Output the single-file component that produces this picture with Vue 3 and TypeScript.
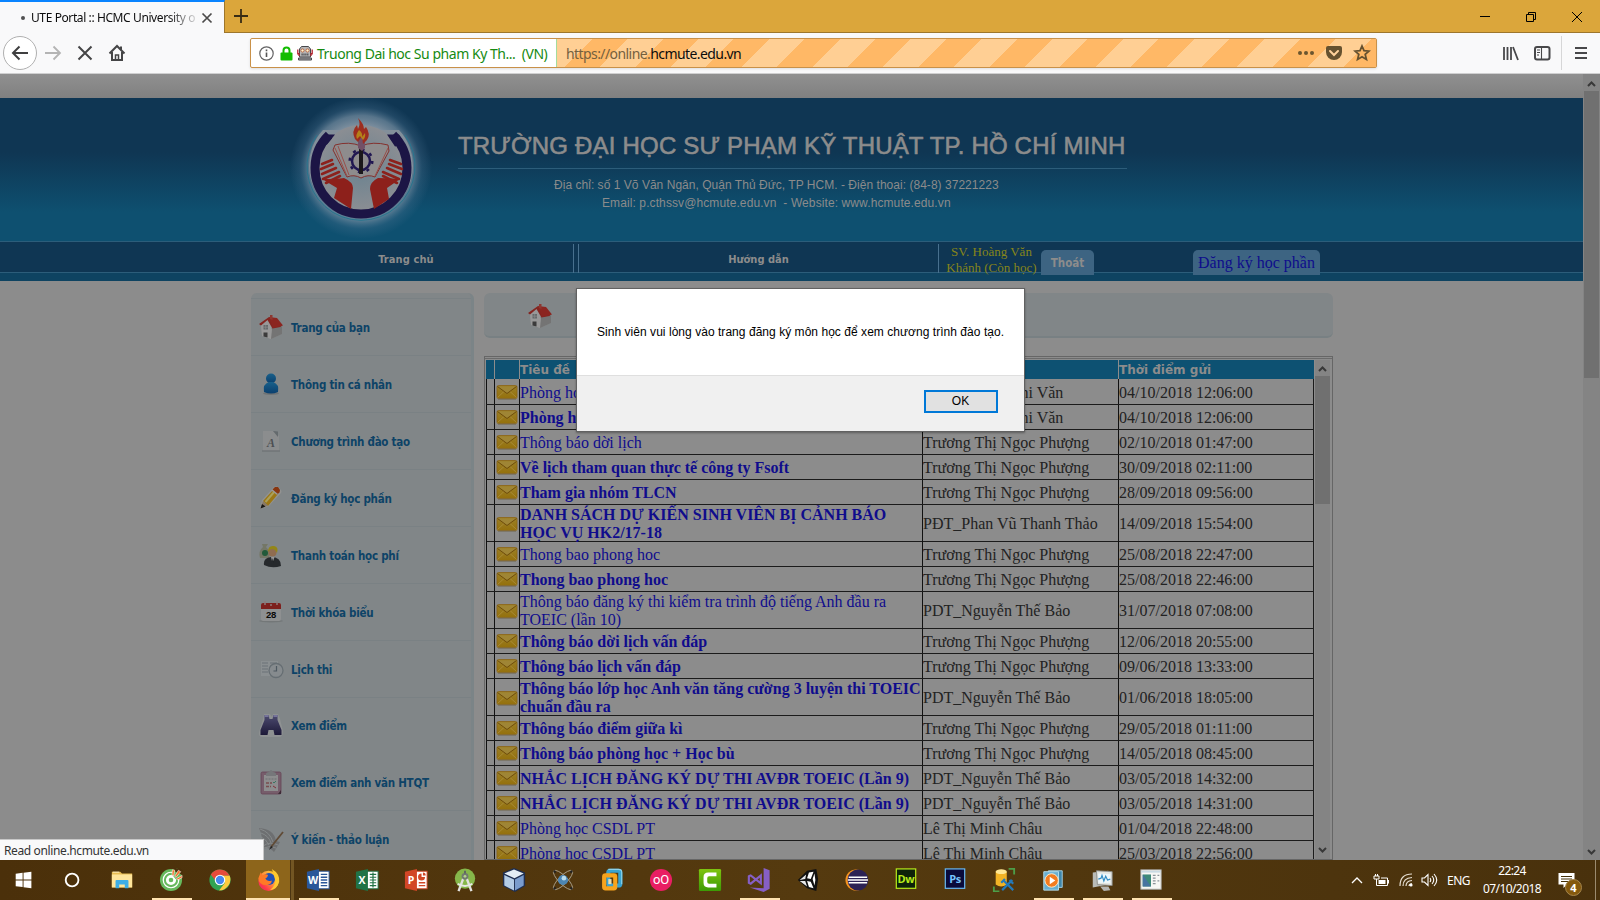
<script setup lang="ts">
interface MenuItem {
  icon: string
  label: string
  glyph?: string
  flush?: boolean
}
interface Message {
  title: string
  sender: string
  sent: string
  bold?: boolean
  tall?: boolean
}
interface Task {
  icon: string
  glyph?: string
  state?: 'open' | 'active'
}

const menu: MenuItem[] = [
  { icon: 'house', label: 'Trang của bạn' },
  { icon: 'person', label: 'Thông tin cá nhân' },
  { icon: 'letter', label: 'Chương trình đào tạo', glyph: 'A' },
  { icon: 'pencil', label: 'Đăng ký học phần' },
  { icon: 'payment', label: 'Thanh toán học phí' },
  { icon: 'calendar', label: 'Thời khóa biểu', glyph: '28' },
  { icon: 'exam', label: 'Lịch thi' },
  { icon: 'binoculars', label: 'Xem điểm', flush: true },
  { icon: 'clipboard', label: 'Xem điểm anh văn HTQT' },
  { icon: 'feather', label: 'Ý kiến - thảo luận' },
]

const phuong = 'Trương Thị Ngọc Phượng'
const bao = 'PDT_Nguyễn Thế Bảo'
const chau = 'Lê Thị Minh Châu'

const messages: Message[] = [
  { title: 'Phòng học CSDL PT', sender: 'Nguyễn Trần Thi Văn', sent: '04/10/2018 12:06:00' },
  { title: 'Phòng học CSDL PT', sender: 'Nguyễn Trần Thi Văn', sent: '04/10/2018 12:06:00', bold: true },
  { title: 'Thông báo dời lịch', sender: phuong, sent: '02/10/2018 01:47:00' },
  { title: 'Về lịch tham quan thực tế công ty Fsoft', sender: phuong, sent: '30/09/2018 02:11:00', bold: true },
  { title: 'Tham gia nhóm TLCN', sender: phuong, sent: '28/09/2018 09:56:00', bold: true },
  { title: 'DANH SÁCH DỰ KIẾN SINH VIÊN BỊ CẢNH BÁO HỌC VỤ HK2/17-18', sender: 'PĐT_Phan Vũ Thanh Thảo', sent: '14/09/2018 15:54:00', bold: true, tall: true },
  { title: 'Thong bao phong hoc', sender: phuong, sent: '25/08/2018 22:47:00' },
  { title: 'Thong bao phong hoc', sender: phuong, sent: '25/08/2018 22:46:00', bold: true },
  { title: 'Thông báo đăng ký thi kiểm tra trình độ tiếng Anh đầu ra TOEIC (lần 10)', sender: bao, sent: '31/07/2018 07:08:00', tall: true },
  { title: 'Thông báo dời lịch vấn đáp', sender: phuong, sent: '12/06/2018 20:55:00', bold: true },
  { title: 'Thông báo lịch vấn đáp', sender: phuong, sent: '09/06/2018 13:33:00', bold: true },
  { title: 'Thông báo lớp học Anh văn tăng cường 3 luyện thi TOEIC chuẩn đầu ra', sender: bao, sent: '01/06/2018 18:05:00', bold: true, tall: true },
  { title: 'Thông báo điểm giữa kì', sender: phuong, sent: '29/05/2018 01:11:00', bold: true },
  { title: 'Thông báo phòng học + Học bù', sender: phuong, sent: '14/05/2018 08:45:00', bold: true },
  { title: 'NHẮC LỊCH ĐĂNG KÝ DỰ THI AVĐR TOEIC (Lần 9)', sender: bao, sent: '03/05/2018 14:32:00', bold: true },
  { title: 'NHẮC LỊCH ĐĂNG KÝ DỰ THI AVĐR TOEIC (Lần 9)', sender: bao, sent: '03/05/2018 14:31:00', bold: true },
  { title: 'Phòng học CSDL PT', sender: chau, sent: '01/04/2018 22:48:00' },
  { title: 'Phòng học CSDL PT', sender: chau, sent: '25/03/2018 22:56:00' },
]

const tasks: Task[] = [
  { icon: 'windows' },
  { icon: 'cortana' },
  { icon: 'explorer' },
  { icon: 'coccoc', state: 'open' },
  { icon: 'chrome' },
  { icon: 'firefox', state: 'active' },
  { icon: 'word', glyph: 'W', state: 'open' },
  { icon: 'excel', glyph: 'X' },
  { icon: 'powerpoint', glyph: 'P' },
  { icon: 'android' },
  { icon: 'netbeans' },
  { icon: 'atom' },
  { icon: 'vmware' },
  { icon: 'oo', glyph: 'oO' },
  { icon: 'camtasia' },
  { icon: 'vstudio', state: 'open' },
  { icon: 'unity' },
  { icon: 'eclipse' },
  { icon: 'dreamweaver', glyph: 'Dw' },
  { icon: 'photoshop', glyph: 'Ps' },
  { icon: 'database' },
  { icon: 'player', state: 'open' },
  { icon: 'monitor', state: 'open' },
  { icon: 'window', state: 'open' },
]
</script>

<template>
  <div class="screen">
    <svg class="sprite" width="0" height="0">
      <defs>
        <linearGradient id="g-env" x1="0" y1="0" x2="0" y2="1"><stop offset="0" stop-color="#9c8128" /><stop offset="1" stop-color="#94700c" /></linearGradient>
        <linearGradient id="g-person" x1="0" y1="0" x2="0" y2="1"><stop offset="0" stop-color="#19608a" /><stop offset="1" stop-color="#0a3f6e" /></linearGradient>
        <linearGradient id="g-bin" x1="0" y1="0" x2="0" y2="1"><stop offset="0" stop-color="#4d4b70" /><stop offset="1" stop-color="#1d1938" /></linearGradient>
        <radialGradient id="g-glow"><stop offset="0.55" stop-color="#8b98a5" /><stop offset="0.74" stop-color="#6f899d" stop-opacity="0.75" /><stop offset="0.86" stop-color="#48708e" stop-opacity="0.3" /><stop offset="1" stop-color="#48708e" stop-opacity="0" /></radialGradient>
        <radialGradient id="g-core"><stop offset="0" stop-color="#6a8290" /><stop offset="1" stop-color="#8b8e93" /></radialGradient>
        <linearGradient id="g-fox" x1="1" y1="0" x2="0" y2="1"><stop offset="0" stop-color="#ffe226" /><stop offset="0.45" stop-color="#ff9640" /><stop offset="0.75" stop-color="#ff3b47" /><stop offset="1" stop-color="#e31587" /></linearGradient>
        <linearGradient id="g-cam" x1="0" y1="0" x2="0" y2="1"><stop offset="0" stop-color="#7fc410" /><stop offset="1" stop-color="#3c9a05" /></linearGradient>
      </defs>
      <symbol id="envelope" viewBox="0 0 22 16">
        <rect x="1" y="1.500" width="20" height="13" rx="1.500" fill="url(#g-env)" stroke="#8d6414" stroke-width=".8" />
        <path d="M1.500 13.500 8 7.500M20.500 13.500 14 7.500" stroke="#a88b39" stroke-width=".9" />
        <path d="M1.500 2.500 11 9.500 20.500 2.500" fill="#9f8535" stroke="#6e4c0b" stroke-width="1" />
        <path d="M2 15.200h18" stroke="#786f5a" stroke-width="1" />
      </symbol>
      <symbol id="house" viewBox="0 0 26 26">
        <path d="M3 11 12 7 24 11V20L13 25 4 22Z" fill="#8c8c8c" />
        <path d="M13 14 24 10.500V20L13 25Z" fill="#747474" />
        <path d="M3 11 10 5 14 15.500 13 25 4 22Z" fill="#989898" />
        <path d="M1 10 11 3 24 10.500 22.500 13 14.500 14.500 9.500 6 3 11.500Z" fill="#842520" />
        <path d="M11 3 15 14 25 11.500 19 4Z" fill="#8b2520" />
        <path d="M12 1h2.500v5L12 5Z" fill="#8e3730" />
        <rect x="5.500" y="11" width="4.500" height="4.500" fill="#65696b" /><path d="M7.700 11v4.500M5.500 13.200H10" stroke="#8c8c8c" stroke-width=".7" />
        <path d="M5.500 18.500h4v5l-4-1Z" fill="#3b3b3b" />
      </symbol>
      <symbol id="person" viewBox="0 0 26 26">
        <ellipse cx="13" cy="22.500" rx="8" ry="1.500" fill="#6f7374" />
        <circle cx="13" cy="7.500" r="5" fill="url(#g-person)" />
        <path d="M6 21q-1.500-8 5-10h4q6.500 2 5 10-7 3-14 0Z" fill="url(#g-person)" />
      </symbol>
      <symbol id="letter" viewBox="0 0 26 26">
        <path d="M5 3h10l6 5v15H5Z" fill="#8b8d8e" /><path d="m15 3 5 6V3.500Z" fill="#646a6d" /><path d="M4 23h18" stroke="#717577" stroke-width="1.500" />
      </symbol>
      <symbol id="pencil" viewBox="0 0 26 26">
        <path d="m2 24 2-9L16 2q2-1 4 0l3 3q1 2 0 3L11 21Z" fill="#929291" /><path d="m5 16 10-11 5 4-10 12Z" fill="#9c7714" /><path d="m7.500 17 9-10.500" stroke="#aaa05b" stroke-width="2" /><path d="m14.500 4.500 2.500-2.500h3l2 3-.5 2.500-2.500 2Z" fill="#88350f" /><path d="m13.500 5.500 1-1 5.500 4.500-1 1Z" fill="#999" /><path d="m2.500 23.500 2.500-7.500 5 4.500Z" fill="#887864" /><path d="m2.500 23.500 1.500-4.500 3.500 2.500Z" fill="#171717" />
      </symbol>
      <symbol id="payment" viewBox="0 0 26 26">
        <path d="M4 2h6L8 5q5 5 3 11H2Q0 9 5 5Z" fill="#747766" /><circle cx="7" cy="11" r="3" fill="#225a3a" />
        <path d="M6 23q-1-7 7-8 10 0 10 9-9 3-17-1Z" fill="#26292c" /><circle cx="14.500" cy="10.500" r="4" fill="#8f6c50" /><path d="M10 10q0-7 6-6 5 1 3 7-2-4-5-4-2 0-4 3Z" fill="#938617" /><path d="m13 15 1.500 6 2-6Z" fill="#999" /><path d="m14.500 16-.5 5 1.500-1Z" fill="#14181c" />
      </symbol>
      <symbol id="calendar" viewBox="0 0 26 26">
        <ellipse cx="13" cy="22" rx="12" ry="1.500" fill="#737778" /><rect x="3" y="4" width="20" height="18" rx="2" fill="#8e9091" /><path d="M3 10V6q0-2 2-2h16q2 0 2 2v4Z" fill="#7d201d" /><path d="M7 2v4M19 2v4M12 6h2" stroke="#8d7979" stroke-width="1.500" />
      </symbol>
      <symbol id="exam" viewBox="0 0 26 26">
        <path d="M3 5h17v15H3Z" fill="#8a8f91" /><path d="M4 7h6M12 7h7M4 10h6M12 10h5M4 13h6M4 16h6" stroke="#767c80" stroke-width="1.300" /><circle cx="18" cy="14.500" r="7" fill="#868b8e" stroke="#666e73" stroke-width="1.300" /><path d="M18.500 10v5h-3" fill="none" stroke="#4e5961" stroke-width="1.200" />
      </symbol>
      <symbol id="binoculars" viewBox="0 0 26 26">
        <path d="M6 1h6l2 3 1-3h5l2 5 3 12q0 6-4 6H5q-5 0-4-5L5 6Z" fill="#8e9192" /><path d="M6.500 2h4l1 4h3l1-4h4v5l4 10v5h-7l-1-5h-5l-1 5h-7v-5l4-10Z" fill="url(#g-bin)" /><path d="M6.500 3h4M15.500 3h4" stroke="#75739a" stroke-width="2" />
      </symbol>
      <symbol id="clipboard" viewBox="0 0 26 26">
        <rect x="3" y="3" width="20" height="22" rx="1.500" fill="#765d6b" stroke="#664455" stroke-width=".8" /><rect x="6" y="6" width="14" height="16" fill="#8d8d8e" /><path d="M8 5q0-2 3-2 2-4 4 0 3 0 3 2v2H8Z" fill="#76777a" /><path d="M7.500 10h11" stroke="#77797c" stroke-width="1.500" stroke-dasharray="2 1" /><path d="M8 14h6M8 17.500h5" stroke="#794c4e" stroke-width="1.400" stroke-dasharray="3 1" /><path d="m15 13 1 1 2-2" fill="none" stroke="#397662" /><path d="m15 17 3 2" stroke="#812f38" /><path d="m20 25 3-4v4Z" fill="#3f2b37" />
      </symbol>
      <symbol id="feather" viewBox="0 0 26 26">
        <path d="M1 2q15 1 17 13l4 1-6 10q-6-7-13-2 3-12-2-22Z" fill="#6d6f71" /><path d="M2 3q10 3 13 13M3 7q8 3 10 10M3 11q5 2 8 8M5 20q7-5 15-1M6 22q6-3 12 0" fill="none" stroke="#85898a" stroke-width="1" /><path d="M25 6 13 21" stroke="#604b36" stroke-width="1.800" /><path d="m13 20-2 4 4-3Z" fill="#222" />
      </symbol>

      <symbol id="windows" viewBox="0 0 26 26"><path d="m4 6.200 7.500-1v7.300H4Zm8.500-1.100L21 4v8.500h-8.500ZM4 13.500h7.500v7.200L4 19.700Zm8.500 0H21v8.500l-8.500-1.200Z" fill="#fff" /></symbol>
      <symbol id="cortana" viewBox="0 0 26 26"><circle cx="12" cy="13" r="6.900" fill="none" stroke="#fff" stroke-width="2" /></symbol>
      <symbol id="explorer" viewBox="0 0 26 26"><path d="M2 4h9l2 2h11v15H2Z" fill="#e8bd53" /><path d="M2 7h22v14H2Z" fill="#ffe59b" /><path d="M3 4.500h7" stroke="#fff2ca" /><path d="M6 22v-8q0-1 1-1h12q1 0 1 1v8h-4v-4h-6v4Z" fill="#3daee6" /></symbol>
      <symbol id="coccoc" viewBox="0 0 26 26"><circle cx="13" cy="13" r="12" fill="#67b95d" /><circle cx="13" cy="13" r="8.400" fill="none" stroke="#fff" stroke-width="1.300" /><circle cx="13" cy="13" r="4" fill="none" stroke="#fff" stroke-width="3" /><path d="M15.500 9 14.500 3l5-2.500L26 4l-2 5-6 3Z" fill="#67b95d" /><path d="M15 2.500 17 .5h6L26 3v5Z" fill="#4b300a" /><path d="m14 8 .5-6 2.500.3-1 6ZM17 9l4-6.500 2.500 1.500-5 6ZM19 11.500l6-3.500v2.500l-5 2.500Z" fill="#f36e2d" stroke="#fff" stroke-width=".6" /></symbol>
      <symbol id="chrome" viewBox="0 0 26 26"><circle cx="13" cy="13" r="11.500" fill="#31a352" /><path d="M3 7Q7 1.500 13 1.500q7 0 10.500 7H13q-4 0-5 5Z" fill="#e64b3b" /><path d="M13 8.500h10.500q2 5-1 10-4 6-10.500 6l6-8q1-5-5-8Z" fill="#fdcb3d" /><circle cx="13" cy="13" r="5.700" fill="#fff" /><circle cx="13" cy="13" r="4.500" fill="#4688ee" /></symbol>
      <symbol id="firefox" viewBox="0 0 26 26"><circle cx="12.500" cy="14" r="11" fill="url(#g-fox)" /><circle cx="13" cy="12" r="6.500" fill="#2150b5" /><path d="M1.500 11 4 4.500l2 3.500q3-2 6-.5l-1 2.500-2 1.500q2 4 7 2 0 4-5 5Q2 19 1.500 11Z" fill="#ff7a25" /><path d="M16 1q9 5 8 14-2 8-10 9 8-6 5-14-1-5-3-9Z" fill="#ffc92e" /></symbol>
      <symbol id="word" viewBox="0 0 26 26"><rect x="12" y="3.500" width="13" height="19" fill="#fff" stroke="#2b579a" /><path d="M16 7h7M16 10h7M16 13h7M16 16h7M16 19h7" stroke="#2b579a" stroke-width="1.400" /><path d="M1 4 14 1v24L1 22Z" fill="#2b579a" /></symbol>
      <symbol id="excel" viewBox="0 0 26 26"><rect x="12" y="3.500" width="13" height="19" fill="#fff" stroke="#217346" /><path d="M16 7h7M16 10h7M16 13h7M16 16h7M16 19h7M19.500 5v16" stroke="#217346" stroke-width="1.300" /><path d="M1 4 14 1v24L1 22Z" fill="#217346" /></symbol>
      <symbol id="powerpoint" viewBox="0 0 26 26"><rect x="12" y="3.500" width="13" height="19" fill="#fff" stroke="#d24726" /><path d="M16 16h7M16 19h7" stroke="#d24726" stroke-width="1.400" /><path d="M19 6a3.800 3.800 0 1 0 3.800 3.800H19Z" fill="#d24726" /><path d="M20.500 5v3h3q0-3-3-3" fill="#d24726" /><path d="M1 4 14 1v24L1 22Z" fill="#d24726" /></symbol>
      <symbol id="android" viewBox="0 0 26 26"><circle cx="13" cy="11.500" r="11" fill="#86b74a" /><path d="m12 9-6 16M14 9l6 16" stroke="#e2e2df" stroke-width="2.600" /><path d="M5 17q8 5 16 0" fill="none" stroke="#e8e8e5" stroke-width="2" /><circle cx="13" cy="9" r="3.700" fill="#717b70" /><circle cx="13" cy="9" r="1.500" fill="#b7d58d" /><path d="M13 3v3" stroke="#5d6262" stroke-width="2" /></symbol>
      <symbol id="netbeans" viewBox="0 0 26 26"><path d="m13 0 12 5v14.500L14 26 1 19.500V5Z" fill="#1e2e50" /><path d="m13 1.500 10.500 4.500-10 5-11-5Z" fill="#e4edf5" /><path d="m2.500 7.500 10.500 5v12l-10.500-5.500Z" fill="#b4cce5" /><path d="m23.500 7.500-9.500 5v12l9.500-5.500Z" fill="#7a9ccd" /></symbol>
      <symbol id="atom" viewBox="0 0 26 26"><g fill="none" stroke="#a9a08a" stroke-width="1"><ellipse cx="13" cy="13" rx="14" ry="4.500" transform="rotate(45 13 13)" /><ellipse cx="13" cy="13" rx="14" ry="4.500" transform="rotate(-45 13 13)" /></g><circle cx="13" cy="13" r="5.500" fill="#4c86b3" /><circle cx="14" cy="11" r="2.500" fill="#b9dbea" /><path d="M3 3l2 2M23 3l-2 2M3 23l2-2M23 23l-2-2" stroke="#222" stroke-width="2" /></symbol>
      <symbol id="vmware" viewBox="0 0 26 26"><rect x="9" y="3" width="13" height="16" rx="2" fill="none" stroke="#38a3d1" stroke-width="4.500" /><rect x="4.500" y="8" width="12" height="14" rx="1.500" fill="none" stroke="#f7a41d" stroke-width="4.500" /><path d="M9 1.500h11q3.500 0 3.500 3v13" fill="none" stroke="#8ed2ea" stroke-width="1.200" /><rect x="9" y="12" width="3.500" height="5.500" fill="#eedeaf" /></symbol>
      <symbol id="oo" viewBox="0 0 26 26"><circle cx="13" cy="13" r="12" fill="#e91e63" /></symbol>
      <symbol id="camtasia" viewBox="0 0 26 26"><rect x="1" y="1" width="24" height="24" rx="1.500" fill="url(#g-cam)" /><path d="M20 5v4h-8q-2 0-2 2v4q0 2 2 2h8v4h-9q-5 0-5-5v-6q0-5 5-5Z" fill="#fff" /></symbol>
      <symbol id="vstudio" viewBox="0 0 26 26"><path d="m18 0 6.500 2.500v20L18 26 3 21l15 1Z" fill="#865fc5" /><path d="m2 9 2-1 11 8.500V8L4 17l-2-1Z" fill="none" stroke="#865fc5" stroke-width="2.300" /></symbol>
      <symbol id="unity" viewBox="0 0 26 26"><path d="m2 13 10-10 10-2 2 11-2 13-10-3Z" fill="#111" /><path d="m4 13 7-6-1 5Zm0 1 6 0 2 6Z" fill="#e9e9e9" /><path d="m12 11 2-6 5-1-3 8ZM12 14l4 1 3 7-5-1.500ZM18 12l2-6 1 7-1 6Z" fill="#fff" /></symbol>
      <symbol id="eclipse" viewBox="0 0 26 26"><circle cx="12" cy="13" r="11.500" fill="#f7941e" /><circle cx="14" cy="13" r="11.300" fill="#2c2255" /><path d="M4 10h20M3 13h22M4 16h20" stroke="#fff" stroke-width="1.700" /></symbol>
      <symbol id="dreamweaver" viewBox="0 0 26 26"><rect x="2.500" y="1" width="21" height="21" fill="#0d2209" stroke="#b7ec1b" stroke-width="1.300" /></symbol>
      <symbol id="photoshop" viewBox="0 0 26 26"><rect x="2.500" y="1" width="21" height="21" fill="#090b3b" stroke="#68b9f4" stroke-width="1.300" /></symbol>
      <symbol id="database" viewBox="0 0 26 26"><path d="M4 4v14q6 4 12 0V4Z" fill="#f3b426" /><ellipse cx="10" cy="4" rx="6" ry="2.600" fill="#ffe793" /><path d="M18 1h6v6M2 20v5.500h6" fill="none" stroke="#4d9e48" stroke-width="2" /><path d="m12 13 11 11M22 13 11 24M10 16l4-4M19 13l4 4" stroke="#2479b9" stroke-width="2.400" /></symbol>
      <symbol id="player" viewBox="0 0 26 26"><path d="M8 3h15v18H8Z" fill="#3f86a9" stroke="#a8d4e7" /><path d="M3 4h16v20H3Z" fill="#68afd1" stroke="#b9dfed" /><circle cx="11.500" cy="13.500" r="7.300" fill="#f37c1f" stroke="#fff1d0" /><path d="m9.500 9.500 6 4-6 4Z" fill="#fff" /></symbol>
      <symbol id="monitor" viewBox="0 0 26 26"><path d="m3 5 17-2v15L3 21Z" fill="#b9bbb7" /><path d="m7 3 17 1v15l-16-1Z" fill="#e3e5e1" stroke="#8b8c88" /><path d="m9 6 13 .5v10L9 16Z" fill="#edf7fb" /><path d="m9 12 3-1 1-3 2 6 2-5 2 4 3-1" fill="none" stroke="#348ec5" stroke-width="1.300" /><path d="M11 20h9l2 4-7 1Z" fill="#b4b4b2" /></symbol>
      <symbol id="window" viewBox="0 0 26 26"><rect x="2" y="2" width="22" height="21" fill="#f7f7f4" stroke="#a9a9a6" /><path d="M2.500 4h21" stroke="#c9dae2" stroke-width="2" /><rect x="4" y="7" width="9" height="13" fill="#3d8a79" /><path d="m4 7 9 13H4Z" fill="#4673a0" /><path d="M15 8h3M15 11h3M15 14h3M15 17h3M20 8h2M20 14h2" stroke="#8a9298" stroke-width="1.300" /></symbol>
    </svg>

    <header class="tabstrip">
      <div class="tab">
        <span class="tab-dot"></span>
        <span class="tab-title">UTE Portal :: HCMC University o</span>
        <svg class="tab-close" viewBox="0 0 12 12"><path d="m1.500 1.500 9 9M10.500 1.500l-9 9" stroke="#4b4a4a" stroke-width="1.700" /></svg>
      </div>
      <svg class="new-tab" viewBox="0 0 14 14"><path d="M7 0v14M0 7h14" stroke="#382c15" stroke-width="1.800" /></svg>
      <div class="window-buttons">
        <svg viewBox="0 0 12 12"><path d="M1 5.500h10" stroke="#000" /></svg>
        <svg viewBox="0 0 12 12"><path d="M1.500 3.500h7v7h-7ZM3.500 3.500v-2h7v7h-2" fill="none" stroke="#000" /></svg>
        <svg viewBox="0 0 12 12"><path d="m1 1 10 10M11 1 1 11" stroke="#000" /></svg>
      </div>
    </header>

    <nav class="toolbar">
      <div class="nav-buttons">
        <span class="back"><svg width="18" height="18" viewBox="0 0 18 18"><path d="M17 9H2M8.500 2.500 2 9l6.500 6.500" fill="none" stroke="#3f3f40" stroke-width="2" /></svg></span>
        <svg width="18" height="18" viewBox="0 0 18 18"><path d="M1 9h15M9.500 2.500 16 9l-6.500 6.500" fill="none" stroke="#b4b4b4" stroke-width="1.800" /></svg>
        <svg width="16" height="16" viewBox="0 0 16 16"><path d="m1.500 1.500 13 13M14.500 1.500l-13 13" stroke="#454546" stroke-width="2" /></svg>
        <svg width="18" height="18" viewBox="0 0 18 18"><path d="M1.500 9.500 9 2l7.500 7.500" fill="none" stroke="#454546" stroke-width="2" /><path d="M4 8v8h10V8M13 2.500V6" fill="none" stroke="#454546" stroke-width="2" /><path d="M7.500 16v-5h3v5" fill="none" stroke="#454546" stroke-width="1.500" /></svg>
      </div>
      <div class="urlbar">
        <div class="identity">
          <svg width="15" height="15" viewBox="0 0 15 15"><circle cx="7.500" cy="7.500" r="6.700" fill="none" stroke="#636364" stroke-width="1.200" /><path d="M7.500 6.500v4.500M7.500 3.500v1.700" stroke="#555" stroke-width="1.600" /></svg>
          <svg class="lock" width="13" height="15" viewBox="0 0 13 15"><path d="M3.500 7V4.500a3 3 0 0 1 6 0V7" fill="none" stroke="#12bc00" stroke-width="2" /><rect x=".5" y="6.500" width="12" height="8" rx="1" fill="#12bc00" /></svg>
          <svg width="16" height="16" viewBox="0 0 16 16"><path d="M4.500 1.500h7l2 2.500v8h-11V4Z" fill="#b8b8b8" stroke="#47474b" /><path d="M.8 4.500v5M15.200 4.500v5M2 8v3M14 8v3" stroke="#b3232d" stroke-width="1.300" /><circle cx="5.500" cy="5.500" r="1.600" fill="#fff5ce" stroke="#b5532c" stroke-width=".8" /><circle cx="10.500" cy="5.500" r="1.600" fill="#fff5ce" stroke="#b5532c" stroke-width=".8" /><path d="M4.500 9.500h7" stroke="#47474b" stroke-width="2" stroke-dasharray="1.200 .7" /><path d="M1.500 15V13h13v2Z" fill="#a8a8aa" stroke="#47474b" /></svg>
          <span class="owner">Truong Dai hoc Su pham Ky Th...&nbsp; (VN)</span>
        </div>
        <div class="address">
          <span class="url"><i>https://online.</i>hcmute.edu.vn</span>
          <svg width="18" height="18" viewBox="0 0 18 18"><circle cx="3" cy="9" r="2" fill="#6b552f" /><circle cx="9" cy="9" r="2" fill="#6b552f" /><circle cx="15" cy="9" r="2" fill="#6b552f" /></svg>
          <svg width="18" height="18" viewBox="0 0 18 18"><path d="M3 2h12q2 0 2 2v4a8 8 0 0 1-16 0V4q0-2 2-2Z" fill="#66512f" /><path d="m5 7 4 4 4-4" fill="none" stroke="#ffd29c" stroke-width="2" stroke-linecap="round" /></svg>
          <svg width="18" height="18" viewBox="0 0 18 18"><path d="m9 2 2 4.600 5 .5-3.800 3.300 1.200 5L9 12.800l-4.400 2.600 1.200-5L2 7.100l5-.5Z" fill="none" stroke="#66512f" stroke-width="1.800" /></svg>
        </div>
      </div>
      <div class="tool-buttons">
        <svg width="18" height="18" viewBox="0 0 18 18"><path d="M2 3v13M5.500 3v13M9 3v13M11 3l5 13" stroke="#48484a" stroke-width="1.800" /></svg>
        <svg width="18" height="18" viewBox="0 0 18 18"><rect x="2" y="3" width="14.500" height="12.500" rx="2" fill="none" stroke="#48484a" stroke-width="2" /><path d="M8.500 3v12M4 6h3M4 8.500h3M4 11h2" stroke="#48484a" stroke-width="1.100" /></svg>
        <span class="divider"></span>
        <svg width="14" height="14" viewBox="0 0 14 14"><path d="M1 2h12M1 7h12M1 12h12" stroke="#48484a" stroke-width="2" /></svg>
      </div>
    </nav>

    <main class="viewport">
      <div class="page">
        <div class="top-strip"></div>
        <section class="banner">
          <svg class="crest" width="142" height="142" viewBox="0 0 142 142">
            <circle cx="71" cy="71" r="71" fill="url(#g-glow)" />
            <path d="M33 33a52 52 0 1 0 76 0Z" fill="#838f9a" />
            <path d="M27 38a54 54 0 1 0 88 0" fill="none" stroke="#27758e" stroke-width="1" />
            <circle cx="71" cy="71" r="43" fill="url(#g-core)" />
            <path d="M39 38a46 46 0 1 0 64 0" fill="none" stroke="#1c1545" stroke-width="9" />
            <path d="M34 37.500h11l-8 10-9 2ZM97 37.500h12l5 10-9 2Z" fill="#1c1545" />
            <path d="M45 48q14-4 26 1 12-5 27-1l1 6-14 26q-7-3-14 1-7-4-14-1L43 53Z" fill="#8e8c8d" stroke="#84312e" stroke-width="1" />
            <path d="M45 51 57 79M98 51 85 79M48 49l11 29" stroke="#98504c" stroke-width="1" fill="none" />
            <circle cx="71" cy="64" r="9" fill="none" stroke="#211751" stroke-width="2.500" /><circle cx="71" cy="64" r="11.300" fill="none" stroke="#211751" stroke-width="2.500" stroke-dasharray="3 5.900" />
            <path d="M71 51v26" stroke="#1b181b" stroke-width="4" />
            <path d="m68 41 3-3 4 3v10l-3 3-4-3Z" fill="#725067" />
            <path d="M65 42q-4-8 2-14l1 4q3-5 0-11 6 6 6 11l2-2q5 7 1 13l-4 4-1-8-4 6Z" fill="#9c2d1f" /><path d="M67 42q-2-4 2-9 4 3 3 7l3-4q1 4-2 7l-3-4Z" fill="#b58119" />
            <g stroke="#8c211c" stroke-width="2.600" stroke-linecap="round"><path d="m32 67 10-4M31 72l12-5M32 77l14-6M33 82l16-7M36 86l14-7M111 67l-11-4M112 72l-13-5M111 77l-14-6M109 82l-16-7M107 86l-14-7" /></g>
            <path d="M32 82q15 0 22-1 9 4 9 10l-2 21-17-11 3-10Z" fill="#8d201b" /><path d="M110 82q-16-1-22-1-8 4-8 11l4 20 15-10-2-11Z" fill="#8d201b" />
          </svg>
          <div class="school">
            <h1>TRƯỜNG ĐẠI HỌC SƯ PHẠM KỸ THUẬT TP. HỒ CHÍ MINH</h1>
            <p class="line-one">Địa chỉ: số 1 Võ Văn Ngân, Quận Thủ Đức, TP HCM. - Điện thoại: (84-8) 37221223</p>
            <p class="line-two">Email: p.cthssv@hcmute.edu.vn &nbsp;- Website: www.hcmute.edu.vn</p>
          </div>
        </section>
        <nav class="site-nav">
          <a class="home-link">Trang chủ</a>
          <a class="guide-link">Hướng dẫn</a>
          <div class="account">
            <p>SV. Hoàng Văn<br />Khánh (Còn học)</p>
            <a class="logout">Thoát</a>
            <a class="enroll">Đăng ký học phần</a>
          </div>
        </nav>
        <div class="body">
          <aside class="menu">
            <a v-for="item in menu" :key="item.label" :class="{ flush: item.flush }">
              <span class="pic"><svg width="26" height="26"><use :href="'#' + item.icon" /></svg><b v-if="item.glyph" :class="'on-' + item.icon">{{ item.glyph }}</b></span>
              <span class="label">{{ item.label }}</span>
            </a>
          </aside>
          <section class="content">
            <div class="crumb"><svg width="26" height="26"><use href="#house" /></svg></div>
            <div class="inbox">
              <div class="grid">
                <div class="row head"><span></span><span></span><span>Tiêu đề</span><span></span><span>Thời điểm gửi</span></div>
                <div v-for="(m, i) in messages" :key="i" class="row" :class="{ tall: m.tall, bold: m.bold }">
                  <span></span>
                  <span class="mail"><svg width="22" height="16"><use href="#envelope" /></svg></span>
                  <span class="title">{{ m.title }}</span>
                  <span class="cell">{{ m.sender }}</span>
                  <span class="cell">{{ m.sent }}</span>
                </div>
              </div>
              <div class="scroll inner">
                <svg viewBox="0 0 9 6"><path d="m1 5 3.500-3.500L8 5" /></svg>
                <i></i>
                <svg viewBox="0 0 9 6"><path d="m1 1 3.500 3.500L8 1" /></svg>
              </div>
            </div>
          </section>
        </div>
      </div>
      <div class="scroll outer">
        <svg viewBox="0 0 9 6"><path d="m1 5 3.500-3.500L8 5" /></svg>
        <i></i>
        <svg viewBox="0 0 9 6"><path d="m1 1 3.500 3.500L8 1" /></svg>
      </div>
    </main>

    <div class="dialog">
      <p>Sinh viên vui lòng vào trang đăng ký môn học để xem chương trình đào tạo.</p>
      <footer><button>OK</button></footer>
    </div>
    <div class="status"><span>Read online.hcmute.edu.vn</span></div>

    <footer class="taskbar">
      <div v-for="t in tasks" :key="t.icon" class="task" :class="t.state">
        <span class="pic"><svg width="24" height="24"><use :href="'#' + t.icon" /></svg><b v-if="t.glyph" :class="'on-' + t.icon">{{ t.glyph }}</b></span>
      </div>
      <div class="tray">
        <svg width="12" height="8" viewBox="0 0 12 8"><path d="m1 7 5-5 5 5" fill="none" stroke="#fff" stroke-width="1.300" /></svg>
        <svg width="16" height="13" viewBox="0 0 16 13"><path d="M1 2h5v3H1ZM2.500 0v2M4.500 0v2M3.500 5v6.500h11V4H8" fill="none" stroke="#fff" /><path d="M5.500 6h7v4h-7Z" fill="#fff" /><path d="M15.500 6v3.500" stroke="#fff" /></svg>
        <svg width="14" height="14" viewBox="0 0 14 14"><path d="M1 13Q1 1 13 1M4 13q0-8 9-8.500M7 13q0-5 6-5.500M10 13q0-2 3-2.500" fill="none" stroke="#e5ddd0" stroke-width="1.200" /><circle cx="12" cy="12" r="1.600" fill="#fff" /></svg>
        <svg width="17" height="14" viewBox="0 0 17 14"><path d="M1 5h2.500L7 1.500v11L3.500 9H1ZM9 5q1.500 2 0 4M11 3q3.500 4 0 8M13 1q5.500 6 0 12" fill="none" stroke="#fff" stroke-width="1.100" /></svg>
        <span class="lang">ENG</span>
        <span class="clock"><b>22:24</b><b>07/10/2018</b></span>
        <span class="notice">
          <svg width="17" height="17" viewBox="0 0 17 17"><path d="M.5 1h16v11.500H9l-3.500 3.500v-3.500h-5Z" fill="#fff" /><path d="M3 4.500h11M3 7h11M3 9.500h8" stroke="#443009" stroke-width="1" /></svg>
          <em>4</em>
        </span>
        <span class="peek"></span>
      </div>
    </footer>
  </div>
</template>

<style>
body { margin: 0; overflow: hidden; }
</style>

<style scoped>
* { box-sizing: border-box; }
p, h1 { margin: 0; font-weight: 400; }
svg { display: block; flex: none; }
.sprite { position: absolute; }
.screen { position: relative; width: 1600px; height: 900px; overflow: hidden; display: flex; flex-direction: column; background: #8c8c8c; font-family: "Noto Sans", "Liberation Sans", sans-serif; }

.pic { display: grid; place-items: center; flex: none; }
.pic > * { grid-area: 1 / 1; }
.pic b { color: #fff; font: 700 10px/12px "Open Sans", sans-serif; white-space: nowrap; }
.pic .on-letter { color: #4b4f52; font: italic 700 12px/12px "Liberation Serif", serif; padding-top: 4px; }
.pic .on-calendar { color: #090909; font: 700 9.500px/10px "Liberation Sans", sans-serif; padding-top: 6px; }
.pic .on-word, .pic .on-excel, .pic .on-powerpoint { padding-right: 10px; font-size: 10.500px; }
.pic .on-oo { font: 400 13px/14px Roboto, sans-serif; letter-spacing: -.3px; }
.pic .on-dreamweaver { color: #b7ec1b; font-size: 11px; letter-spacing: -.3px; padding-bottom: 2px; }
.pic .on-photoshop { color: #76c4fb; font-size: 11px; letter-spacing: -.4px; padding-bottom: 2px; }

.tabstrip { flex: none; height: 33px; display: flex; background: #dba63b; border-bottom: 1px solid #9d762c; }
.tab { width: 225px; height: 33px; display: flex; align-items: center; background: #f9f9fa; border-top: 2px solid #0a84ff; border-right: 1px solid #9d762c; padding-left: 21px; }
.tab-dot { width: 4px; height: 4px; border-radius: 2px; background: #515151; flex: none; }
.tab-title { margin-left: 6px; width: 170px; white-space: nowrap; font-size: 12px; letter-spacing: -.4px; line-height: 20px; color: transparent; background: linear-gradient(90deg, #0c0c0d 80%, #0c0c0d00 100%); -webkit-background-clip: text; background-clip: text; }
.tab-close { width: 12px; height: 12px; }
.new-tab { width: 14px; height: 14px; margin: 9px 0 0 9px; }
.window-buttons { margin-left: auto; display: flex; gap: 34px; padding: 11px 17px 0 0; }
.window-buttons svg { width: 12px; height: 12px; }

.toolbar { flex: none; height: 41px; display: flex; align-items: center; background: #f9f9fa; border-bottom: 1px solid #cfcfd0; }
.nav-buttons { width: 250px; padding-left: 3px; display: flex; align-items: center; }
.nav-buttons > svg { margin-left: 7px; }
.nav-buttons > svg + svg { margin-left: 15px; }
.back { width: 34px; height: 34px; border: 1px solid #b0b0b0; border-radius: 50%; background: #fff; display: grid; place-items: center; }
.urlbar { width: 1127px; height: 30px; display: flex; border: 1px solid #c99149; border-radius: 2px; background: #fff; box-shadow: 0 1px 3px #0000001c; }
.identity { width: 306px; flex: none; display: flex; align-items: center; padding-left: 8px; border-right: 1px solid #a4dc9c; }
.lock { margin: 0 4px 0 6px; }
.owner { margin-left: 4px; padding-top: 1px; white-space: nowrap; font-size: 14px; letter-spacing: -.46px; color: #168a12; }
.address { flex: 1; display: flex; align-items: center; gap: 10px; padding: 0 5px 0 9px; background: repeating-linear-gradient(135deg, #ffcf94 0 25px, #ffb866 25px 50.060px); }
.url { flex: 1; padding-top: 1px; font-size: 14px; letter-spacing: -.58px; color: #0c0c0d; }
.url i { font-style: normal; color: #75603e; }
.tool-buttons { flex: 1; display: flex; align-items: center; justify-content: flex-end; padding-right: 12px; }
.tool-buttons svg + svg { margin-left: 13px; margin-right: 1px; }
.tool-buttons .divider + svg { margin: 0; }
.divider { width: 1px; height: 34px; margin: 0 12px 0 9px; background: #d6d6d7; }

.viewport { flex: none; height: 786px; display: flex; overflow: hidden; }
.page { width: 1583px; height: 786px; overflow: hidden; }
.top-strip { height: 24px; background: linear-gradient(#909090, #808080); }
.banner { height: 143px; display: flex; background: linear-gradient(#0f3653 0, #0f3653 38%, #0e5070 80%, #0e5070 100%); }
.crest { margin: -1px 0 0 290px; }
.school { margin-left: 26px; width: 669px; }
.school h1 { margin-top: 31px; height: 40px; border-bottom: 1px solid #2c5d7a; font: 400 24px/34px "Liberation Sans", Arial, sans-serif; -webkit-text-stroke: .6px #8c8c8c; letter-spacing: .19px; white-space: nowrap; color: #8c8c8c; }
.school p { font: 12px/18px "Liberation Sans", Arial, sans-serif; letter-spacing: .03px; color: #8b8b8b; white-space: nowrap; }
.school .line-one { margin: 7px 0 0 96px; }
.school .line-two { margin-left: 144px; letter-spacing: .1px; }
.site-nav { height: 40px; display: flex; background: linear-gradient(#0f3653 0 30px, #2c5d7a 30px 31px, #0e4361 31px); border-top: 1px solid #2c5d7a; padding-top: 2px; }
.site-nav .home-link, .site-nav .guide-link { height: 29px; font: 700 11px/31px "DejaVu Sans Condensed", "DejaVu Sans", sans-serif; color: #8c8c8c; text-align: center; }
.home-link { width: 574px; padding-left: 239px; border-right: 1px solid #48708e; letter-spacing: .1px; }
.guide-link { width: 361px; margin-left: 4px; border-left: 1px solid #48708e; border-right: 1px solid #48708e; }
.account { display: flex; align-items: flex-start; padding-left: 5px; font-family: "Liberation Serif", "Times New Roman", serif; }
.account p { width: 95px; font-size: 13px; line-height: 16px; text-align: center; white-space: nowrap; color: #86851a; }
.logout, .enroll { height: 25px; margin-top: 6px; border-radius: 5px 5px 0 0; background: #3d6482; text-align: center; }
.logout { width: 53px; margin-left: 2px; font: 700 11.500px/27px "DejaVu Sans Condensed", sans-serif; color: #8c8c8c; }
.enroll { width: 127px; margin-left: 99px; font-size: 16px; line-height: 26px; color: #0e0d8c; }

.body { display: flex; align-items: flex-start; padding: 12px 0 0 251px; }
.menu { width: 223px; height: 580px; padding-top: 5px; border-right: 3px solid #7b8487; border-top-left-radius: 6px; border-top-right-radius: 6px; background: #818688; }
.menu a { height: 57px; display: flex; align-items: center; padding: 0 0 0 7px; border-top: 1px solid #7a8184; font: 700 11.500px/18px "DejaVu Sans Condensed", "DejaVu Sans", sans-serif; letter-spacing: -.25px; color: #0d4367; white-space: nowrap; }
.menu a .label { margin: 1px 0 0 7px; }
.menu a.flush { height: 56px; }
.menu a.flush + a { border-color: transparent; }
.content { margin-left: 10px; width: 849px; }
.crumb { height: 45px; border-radius: 6px; border-bottom: 2px solid #788083; background: #818688; padding: 10px 0 0 43px; }
.inbox { margin-top: 18px; height: 504px; display: flex; border: 1px solid #666; box-shadow: inset 0 1px #8c8c8c, inset 0 2px #6b6b6b; padding: 3px 0 0 1px; }
.grid { width: 828px; height: 499px; overflow: hidden; font: 16px/18px "Liberation Serif", "Times New Roman", serif; color: #222; }
.row { display: grid; grid-template-columns: 8px 25px 403px 196px 196px; height: 25px; border-bottom: 1px solid #1b1b1b; border-right: 1px solid #1b1b1b; }
.row.tall { height: 37px; }
.head + .row { height: 26px; }
.row > span { display: flex; align-items: center; border-left: 1px solid #111; white-space: nowrap; }
.row > .title { white-space: normal; color: #100c8c; padding-top: 1px; }
.row > .cell { padding-top: 2px; }
.row.tall > .cell { padding-top: 0; }
.head + .row > .title, .head + .row > .cell { padding-top: 3px; }
.bold > .title { font-weight: 700; }
.mail { padding-left: 1px; }
.row.head { height: 19px; border: 0; background: #0d5172; color: #8c8c8c; font: 700 12px/19px "DejaVu Sans", sans-serif; }
.row.head > span { border-color: #8c8c8c; padding-top: 1px; }
.row.head > span:first-child { border-color: transparent; }

.scroll { display: flex; flex-direction: column; align-items: center; background: #848484; }
.scroll svg { width: 9px; height: 6px; }
.scroll path { fill: none; stroke: #383838; stroke-width: 2; }
.scroll i { background: #707070; }
.scroll svg:last-child { margin-top: auto; }
.inner { width: 15px; padding: 6px 0 6px; margin-left: 1px; }
.inner i { width: 15px; height: 128px; margin-top: 4px; }
.outer { width: 17px; height: 786px; padding: 7px 0 5px; }
.outer i { width: 15px; height: 287px; margin-top: 4px; }

.dialog { position: absolute; left: 576px; top: 288px; width: 449px; height: 144px; border: 1px solid #616161; background: #fff; box-shadow: 0 1px 2px #0005; }
.dialog p { height: 86px; padding: 34px 0 0 20px; font: 12px/18px "Liberation Sans", Arial, sans-serif; letter-spacing: .04px; white-space: nowrap; color: #000; }
.dialog footer { height: 56px; display: flex; justify-content: flex-end; padding: 14px 26px 0 0; border-top: 1px solid #dfdfdf; background: #f0f0f0; }
.dialog button { width: 74px; height: 23px; padding: 0 1px 1px 0; border: 2px solid #0078d7; background: #e1e1e1; font: 12px/18px "Liberation Sans", Arial, sans-serif; color: #000; }
.status { position: absolute; left: 0; top: 839px; width: 264px; height: 21px; padding-left: 4px; border-top: 1px solid #c8c8c8; border-right: 1px solid #c8c8c8; background: #f9f9fa; font-size: 12px; line-height: 21px; letter-spacing: -.37px; color: #333; }

.taskbar { flex: none; height: 40px; display: flex; background: linear-gradient(90deg, #4b300a, #553a0f 50%, #49310c); }
.task { width: 49px; height: 40px; flex: none; display: flex; justify-content: center; align-items: center; padding-right: 1px; }
.task.open { background: linear-gradient(#ffe3b0, #ffe3b0) center bottom / 40px 2px no-repeat; }
.task.active { background: linear-gradient(#ffe3b0, #ffe3b0) 1px bottom / 44px 2px no-repeat, linear-gradient(90deg, transparent 1px, #8d651b 1px 45px, #4c3511 45px 46px, #735623 46px); }
.tray { flex: 1; display: flex; align-items: center; padding-left: 175px; color: #fff; font-size: 12px; }
.tray svg:nth-child(2) { margin-left: 10px; }
.tray svg:nth-child(3) { margin-left: 10px; }
.tray svg:nth-child(4) { margin-left: 8px; }
.lang { margin-left: 9px; width: 24px; font-size: 12px; letter-spacing: -.5px; }
.clock { width: 60px; margin-left: 11px; display: flex; flex-direction: column; align-items: center; font-size: 12px; line-height: 18px; letter-spacing: -.6px; }
.clock b { font-weight: 400; }
.notice { position: relative; margin-left: 16px; }
.notice em { position: absolute; left: 7px; top: 7px; width: 17px; height: 17px; border: 1px solid #a5864d; border-radius: 50%; background: #84580c; font: 700 11px/15px "Open Sans", sans-serif; text-align: center; }
.peek { width: 1px; height: 40px; margin-left: auto; margin-right: 4px; background: #9b8a6e; }
</style>
